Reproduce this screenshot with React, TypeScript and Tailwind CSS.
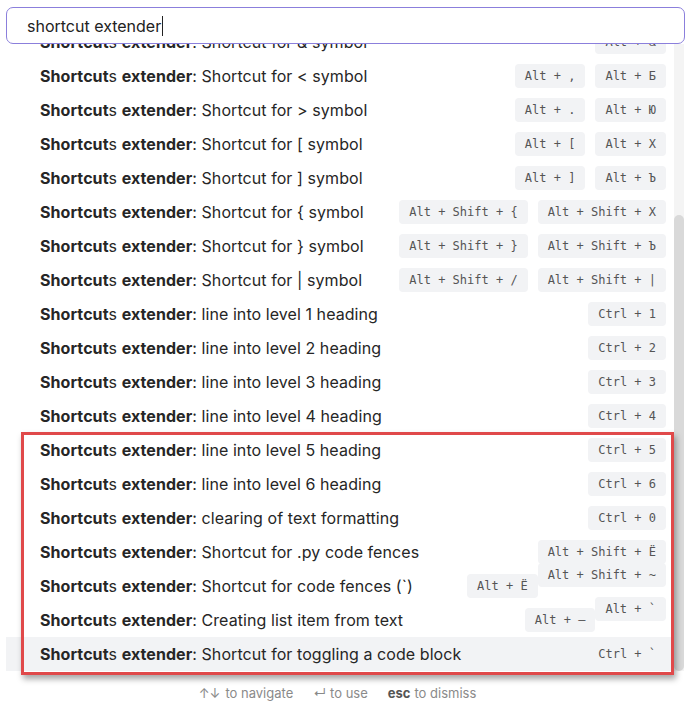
import React from "react";

type Row = { desc: string; keys: string[]; lift?: boolean; active?: boolean };

const rows: Row[] = [
  { desc: "Shortcut for & symbol", keys: ["Alt + &"] },
  { desc: "Shortcut for < symbol", keys: ["Alt + ,", "Alt + Б"] },
  { desc: "Shortcut for > symbol", keys: ["Alt + .", "Alt + Ю"] },
  { desc: "Shortcut for [ symbol", keys: ["Alt + [", "Alt + Х"] },
  { desc: "Shortcut for ] symbol", keys: ["Alt + ]", "Alt + Ъ"] },
  { desc: "Shortcut for { symbol", keys: ["Alt + Shift + {", "Alt + Shift + Х"] },
  { desc: "Shortcut for } symbol", keys: ["Alt + Shift + }", "Alt + Shift + Ъ"] },
  { desc: "Shortcut for | symbol", keys: ["Alt + Shift + /", "Alt + Shift + |"] },
  { desc: "line into level 1 heading", keys: ["Ctrl + 1"] },
  { desc: "line into level 2 heading", keys: ["Ctrl + 2"] },
  { desc: "line into level 3 heading", keys: ["Ctrl + 3"] },
  { desc: "line into level 4 heading", keys: ["Ctrl + 4"] },
  { desc: "line into level 5 heading", keys: ["Ctrl + 5"] },
  { desc: "line into level 6 heading", keys: ["Ctrl + 6"] },
  { desc: "clearing of text formatting", keys: ["Ctrl + 0"] },
  { desc: "Shortcut for .py code fences", keys: ["Alt + Shift + Ë"] },
  { desc: "Shortcut for code fences (`)", keys: ["Alt + Ë", "Alt + Shift + ~"], lift: true },
  { desc: "Creating list item from text", keys: ["Alt + –", "Alt + `"], lift: true },
  { desc: "Shortcut for toggling a code block", keys: ["Ctrl + `"], active: true },
];

const Kbd = ({ label, up }: { label: string; up?: boolean }) => (
  <span
    className={`h-[24px] px-[10px] flex items-center rounded-[4px] bg-[#f2f3f5] text-[#555] text-[12px] tracking-normal whitespace-pre ${up ? "-translate-y-[11px]" : ""}`}
    style={{ fontFamily: '"DejaVu Sans Mono", monospace' }}
  >
    {label}
  </span>
);

export default function App() {
  return (
    <div
      className="w-[691px] h-[709px] bg-white relative overflow-hidden flex flex-col"
      style={{ fontFamily: "Inter, 'Noto Sans', sans-serif" }}
    >
      <div className="relative z-10 mx-[6px] mt-[7px] h-[37px] bg-white border border-[#8b7fdc] rounded-[7px] px-[20px] flex items-center text-[16px] text-[#222]">
        shortcut extender<span className="w-px h-[20px] bg-[#222] ml-px" />
      </div>

      <div className="flex h-[627px]">
        <div className="ml-[6px] w-[666px] overflow-hidden">
          <div className="-mt-[19px]">
            {rows.map((r, i) => (
              <div
                key={`row_${i}`}
                className={`h-[34px] flex items-center justify-between pl-[34px] pr-[6px] text-[16px] text-[#262626] ${r.active ? "bg-[#f2f3f5]" : ""}`}
              >
                <div className="whitespace-pre tracking-[0.07px]">
                  <b className="font-bold">Shortcut</b>s <b className="font-bold">extender</b>: {r.desc}
                </div>
                <div className={`flex items-center ${r.lift ? "gap-0" : "gap-[10px]"}`}>
                  {r.keys.map((k, j) => (
                    <Kbd key={`k_${i}_${j}`} label={k} up={r.lift && j === 1} />
                  ))}
                </div>
              </div>
            ))}
          </div>
        </div>
        <div className="ml-[2px] w-[10px] bg-[#f4f4f4] flex flex-col">
          <div className="mt-[171px] grow bg-[#d9d9d9] rounded-[5px]" />
        </div>
      </div>

      <div className="flex justify-center items-center gap-[20px] mt-[13px] pr-[16px] text-[13px] text-[#8a8a8a]">
        <span><span className="mr-[5px]">↑↓</span>to navigate</span>
        <span><span className="mr-[4px]">↵</span>to use</span>
        <span><b className="font-bold text-[#555] mr-[4px]">esc</b>to dismiss</span>
      </div>

      <div className="absolute left-[21px] top-[432px] w-[653px] h-[243px] border-[3px] border-[#e0494a] shadow-[2px_4px_6px_rgba(0,0,0,0.35)] pointer-events-none" />
    </div>
  );
}
